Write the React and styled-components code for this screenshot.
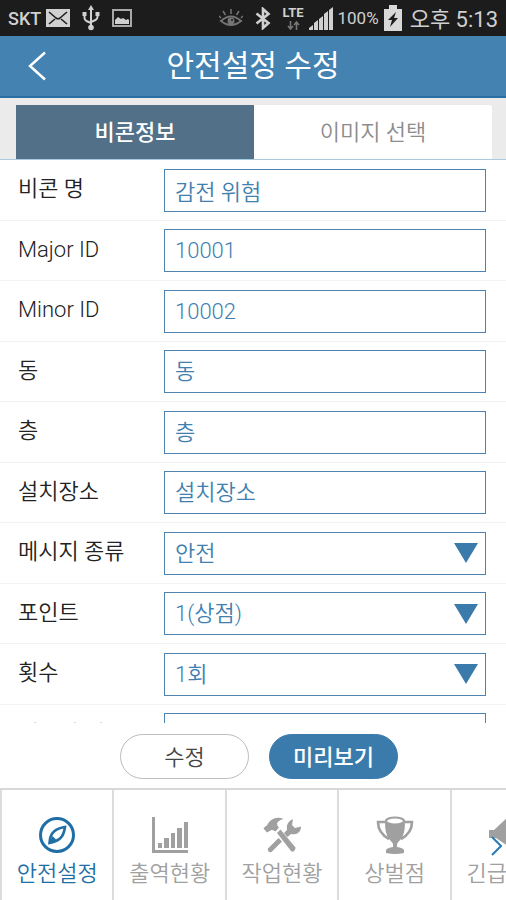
import React, { useState } from "react";
import styled, { createGlobalStyle, css } from "styled-components";

const GlobalStyle = createGlobalStyle`
  *, *::before, *::after { box-sizing: border-box; }
  html, body { margin: 0; }
  body, button, input, select {
    font-family: Roboto, "Noto Sans CJK KR", sans-serif;
  }
`;

const Screen = styled.div`
  display: flex;
  flex-direction: column;
  height: 100vh;
  overflow: hidden;
  background: #fff;
  font-size: 22px;
`;

const StatusBar = styled.div`
  display: flex;
  align-items: center;
  justify-content: space-between;
  flex: none;
  height: 36px;
  padding: 0 8px;
  background: #1c1c1c;
  color: #d0d0d0;
  white-space: nowrap;
  svg { display: block; flex: none; }
`;

const StatusGroup = styled.div`
  display: flex;
  align-items: center;
  gap: ${(p) => p.$gap}px;
`;

const Carrier = styled.span`
  font-size: 18px;
  font-weight: 500;
`;

const Network = styled.span`
  display: flex;
  flex-direction: column;
  align-items: center;
  gap: 2px;
  font-size: 13px;
  font-weight: 700;
  line-height: 12px;
`;

const Percent = styled.span`
  font-size: 17px;
`;

const Clock = styled.time`
  margin-left: 3px;
  padding-top: 3px;
  font-size: 22px;
  line-height: 33px;
`;

const Header = styled.header`
  display: grid;
  grid-template-columns: 76px 1fr 76px;
  align-items: center;
  flex: none;
  height: 62px;
  background: #4382b1;
  border-bottom: 2px solid #2a70a4;
`;

const BackButton = styled.button`
  display: flex;
  align-items: center;
  height: 60px;
  padding: 0 0 0 28px;
  border: 0;
  background: none;
  color: #fff;
`;

const Title = styled.h1`
  margin: 0;
  color: #fff;
  font-size: 30px;
  font-weight: 400;
  line-height: 60px;
  text-align: center;
  white-space: nowrap;
`;

const Tabs = styled.div`
  display: flex;
  flex: none;
  height: 62px;
  padding: 7px 14px 0 16px;
  background: #ebebeb;
  border-bottom: 1px solid #a9cbe0;
`;

const Tab = styled.button`
  flex: 1;
  padding: 0 0 4px;
  border: 0;
  font-size: 22px;
  font-weight: 350;
  background: #fff;
  color: #8c8c8c;
  border-radius: 0 3px 0 0;
  ${(p) =>
    p.$active &&
    css`
      background: #527088;
      color: #fff;
      font-weight: 500;
      border-radius: 0;
    `}
`;

const Form = styled.form`
  flex: 1;
  min-height: 0;
  overflow: hidden;
`;

const Row = styled.div`
  display: grid;
  grid-template-columns: 146px 1fr;
  align-items: center;
  height: 61px;
  padding: 0 20px 0 18px;
  border-bottom: 1px solid #f3f3f3;
  &:nth-child(even) { height: 60px; }
`;

const Label = styled.label`
  color: #222;
  font-weight: 350;
  line-height: 32px;
  padding-bottom: 2px;
  white-space: nowrap;
`;

const control = css`
  width: 100%;
  height: 43px;
  padding: 0 10px;
  border: 1px solid #4f82ae;
  border-radius: 0;
  background: #fff;
  color: #3f80b0;
  font-size: 22px;
  font-weight: 350;
  outline: none;
`;

const TextInput = styled.input`
  ${control}
  &::placeholder { color: #3f80b0; opacity: 1; }
`;

const SelectBox = styled.div`
  display: grid;
  align-items: center;
  > * { grid-area: 1 / 1; }
  svg { justify-self: end; margin-right: 8px; pointer-events: none; }
`;

const Select = styled.select`
  ${control}
  appearance: none;
`;

const Actions = styled.div`
  display: flex;
  justify-content: center;
  flex: none;
  gap: 20px;
  height: 65px;
  padding: 11px 0 9px 12px;
`;

const Pill = styled.button`
  width: 129px;
  padding: 0 0 3px;
  border: 1px solid ${(p) => (p.$primary ? "#3b7bab" : "#bcbcbc")};
  border-radius: 23px;
  background: ${(p) => (p.$primary ? "#3b7bab" : "#fff")};
  color: ${(p) => (p.$primary ? "#fff" : "#444")};
  font-size: 22px;
  font-weight: ${(p) => (p.$primary ? 500 : 350)};
`;

const Nav = styled.nav`
  display: grid;
  grid-template-columns: repeat(5, calc(100% / 4.5));
  position: relative;
  flex: none;
  height: 112px;
  overflow: hidden;
  border-top: 2px solid #d8d8d8;
`;

const NavItem = styled.a`
  display: flex;
  flex-direction: column;
  align-items: center;
  gap: 4px;
  padding-top: 26px;
  border-left: 2px solid #dcdcdc;
  color: ${(p) => (p.$active ? "#1f6fa6" : "#a0a0a0")};
  font-weight: 350;
  line-height: 32px;
  text-decoration: none;
  white-space: nowrap;
`;

const NextButton = styled.button`
  position: absolute;
  right: 4px;
  top: 46px;
  padding: 0;
  border: 0;
  background: none;
  color: #2a7ab5;
  svg { display: block; }
`;

const MailIcon = () => (
  <svg width="24" height="18" viewBox="0 0 24 18">
    <rect width="24" height="18" fill="#d0d0d0" />
    <path d="M3 3l7 6q2 1.500 4 0l7-6M3 15l6-5M21 15l-6-5" fill="none" stroke="#1c1c1c" strokeWidth="1.600" />
  </svg>
);

const UsbIcon = () => (
  <svg width="18" height="26" viewBox="0 0 18 26" fill="none" stroke="#d0d0d0" strokeWidth="2">
    <path d="M9 4v18M2.500 9v4q0 2 2 3l4.500 2M15.500 9v3q0 2-2 3L9 17" />
    <path d="M9 0l3 5H6z" fill="#d0d0d0" stroke="none" />
    <circle cx="9" cy="22.500" r="2.800" fill="#d0d0d0" stroke="none" />
    <path d="M0.500 7h4v4h-4zM13.500 7h4v4h-4z" fill="#d0d0d0" stroke="none" />
  </svg>
);

const ImageIcon = () => (
  <svg width="20" height="18" viewBox="0 0 20 18">
    <rect x="1" y="1" width="18" height="16" fill="none" stroke="#a8a8a8" strokeWidth="2" />
    <path d="M3 15v-4l3-3 3 2 2-1 3 2 2-1 1 1v4z" fill="#d0d0d0" />
  </svg>
);

const EyeIcon = () => (
  <svg width="24" height="18" viewBox="0 0 24 18" fill="none" stroke="#747474" strokeWidth="2">
    <path d="M2 12q10-9 20 0q-10 8-20 0z" />
    <circle cx="12" cy="12" r="3.500" fill="#747474" stroke="none" />
    <path d="M12 5V0M6.500 6L4 2M17.500 6L20 2M2 9L0 7M22 9l2-2" strokeWidth="1.500" />
    <circle cx="13" cy="11" r="1" fill="#1c1c1c" stroke="none" />
  </svg>
);

const BluetoothIcon = () => (
  <svg width="16" height="23" viewBox="0 0 16 23" fill="none" stroke="#d0d0d0" strokeWidth="2.600">
    <path d="M1.500 6.500L13.500 16l-5.500 5V2l5.500 5L1.500 16.500" />
  </svg>
);

const ArrowsIcon = () => (
  <svg width="13" height="9" viewBox="0 0 13 9" fill="none" stroke="#777" strokeWidth="1.600">
    <path d="M3.500 0v7M1 5l2.500 3L6 5M9.500 9V2M7 4l2.500-3L12 4" />
  </svg>
);

const SignalIcon = () => (
  <svg width="24" height="24" viewBox="0 0 24 24" fill="#d0d0d0">
    <path d="M0 24v-2l4-3v5zM5 24v-7l4-3v10zM10 24V13l4-3v14zM15 24V8l4-3v19zM20 24V4l4-3v23z" />
  </svg>
);

const BatteryIcon = () => (
  <svg width="18" height="26" viewBox="0 0 18 26">
    <path d="M5 0h8v4h5v22H0V4h5z" fill="#d8d8d8" />
    <path d="M12 7L4 15h4l-2 7 8-9h-4z" fill="#1c1c1c" />
  </svg>
);

const BackIcon = () => (
  <svg width="18" height="30" viewBox="0 0 18 30" fill="none" stroke="currentColor" strokeWidth="2.500">
    <path d="M17 1.500L2 15l15 13.500" />
  </svg>
);

const ArrowDown = () => (
  <svg width="24" height="20" viewBox="0 0 24 20">
    <path d="M0 0h24L12 20z" fill="#3b7bab" />
  </svg>
);

const CompassIcon = () => (
  <svg width="38" height="38" viewBox="0 0 38 38" fill="none" stroke="currentColor">
    <circle cx="19" cy="19" r="16.500" strokeWidth="3" />
    <path d="M27 11q-1 8-5 11.500T11.500 27Q12 19 16 15.500T27 11z" strokeWidth="2.600" />
    <path d="M10.500 28l4-8 4.500 4.500z" fill="currentColor" stroke="none" />
  </svg>
);

const ChartIcon = () => (
  <svg width="38" height="38" viewBox="0 0 38 38" fill="currentColor">
    <path d="M1 1h3v33h33v3H1zM7 27h4v5H7zM13 22h5v10h-5zM20 17h4v15h-4zM26 12h5v20h-5zM33 6h4v26h-4z" />
  </svg>
);

const ToolsIcon = () => (
  <svg width="38" height="38" viewBox="0 0 38 38" fill="currentColor">
    <path d="M5 32.500L15.500 22l3.500 3.500L8.500 36q-2 .5-3-.5t-.5-3z" />
    <path d="M14 17l3.500-3.500L32.500 31.500q0 2-1.500 3.500-1.500 1.500-3 0z" />
    <path d="M0.500 12.500Q2 10 4 9.500q2-5 7-7Q16 1 20.500 3 15 4.500 14 7.500q0 2 2 4l-3.500 4q-2.500-2-4-1.500L4 16.500z" />
    <path d="M30 3l-1 6 3 3 6-1.500q0 4-3 6.500-3 2-7 1l-3.500 3-3.500-4 3-3q-1-4 1-7 2-3 5-4z" />
  </svg>
);

const TrophyIcon = () => (
  <svg width="38" height="38" viewBox="0 0 38 38">
    <g fill="none" stroke="currentColor">
      <path d="M9 6H2q0 11 11 17M29 6h7q0 11-11 17" strokeWidth="2.600" />
      <ellipse cx="19" cy="5" rx="9" ry="3.500" strokeWidth="2.200" />
    </g>
    <path d="M9 6q10 6 20 0 0 12-4 17-3 3-4 5v3q6 1 7 3v3q-9 2-18 0v-3q1-2 7-3v-3q-1-2-4-5-4-5-4-17z" fill="currentColor" />
  </svg>
);

const MegaphoneIcon = () => (
  <svg width="38" height="38" viewBox="0 0 38 38" fill="currentColor">
    <path d="M1 14h5L20 1v29L8 22H1zM24 12q7 7 0 13z" />
  </svg>
);

const NextIcon = () => (
  <svg width="11" height="20" viewBox="0 0 11 20" fill="none" stroke="currentColor" strokeWidth="2">
    <path d="M1 1l9 9-9 9" />
  </svg>
);

const fields = [
  { id: "name", label: "비콘 명", value: "감전 위험" },
  { id: "major", label: "Major ID", value: "10001" },
  { id: "minor", label: "Minor ID", value: "10002" },
  { id: "building", label: "동", placeholder: "동" },
  { id: "floor", label: "층", placeholder: "층" },
  { id: "place", label: "설치장소", placeholder: "설치장소" },
  { id: "type", label: "메시지 종류", options: ["안전"] },
  { id: "point", label: "포인트", options: ["1(상점)"] },
  { id: "count", label: "횟수", options: ["1회"] },
  { id: "message", label: "메시지 내용", value: "" },
];

const navItems = [
  { label: "안전설정", Icon: CompassIcon },
  { label: "출역현황", Icon: ChartIcon },
  { label: "작업현황", Icon: ToolsIcon },
  { label: "상벌점", Icon: TrophyIcon },
  { label: "긴급호출", Icon: MegaphoneIcon },
];

function Field({ id, label, value, placeholder, options }) {
  return (
    <Row>
      <Label htmlFor={id}>{label}</Label>
      {options ? (
        <SelectBox>
          <Select id={id}>
            {options.map((o) => (
              <option key={o}>{o}</option>
            ))}
          </Select>
          <ArrowDown />
        </SelectBox>
      ) : (
        <TextInput id={id} type="text" defaultValue={value} placeholder={placeholder} />
      )}
    </Row>
  );
}

export default function App() {
  const [tab, setTab] = useState(0);
  return (
    <>
      <GlobalStyle />
      <Screen>
        <StatusBar>
          <StatusGroup $gap={12}>
            <StatusGroup $gap={5}>
              <Carrier>SKT</Carrier>
              <MailIcon />
            </StatusGroup>
            <UsbIcon />
            <ImageIcon />
          </StatusGroup>
          <StatusGroup $gap={5}>
            <StatusGroup $gap={12}>
              <EyeIcon />
              <BluetoothIcon />
              <Network>
                LTE
                <ArrowsIcon />
              </Network>
            </StatusGroup>
            <SignalIcon />
            <Percent>100%</Percent>
            <BatteryIcon />
            <Clock>오후 5:13</Clock>
          </StatusGroup>
        </StatusBar>
        <Header>
          <BackButton type="button" aria-label="뒤로">
            <BackIcon />
          </BackButton>
          <Title>안전설정 수정</Title>
        </Header>
        <Tabs role="tablist">
          {["비콘정보", "이미지 선택"].map((name, i) => (
            <Tab key={name} type="button" role="tab" aria-selected={tab === i} $active={tab === i} onClick={() => setTab(i)}>
              {name}
            </Tab>
          ))}
        </Tabs>
        <Form id="beacon" onSubmit={(e) => e.preventDefault()}>
          {fields.map((f) => (
            <Field key={f.id} {...f} />
          ))}
        </Form>
        <Actions>
          <Pill type="submit" form="beacon">수정</Pill>
          <Pill type="button" $primary>미리보기</Pill>
        </Actions>
        <Nav>
          {navItems.map(({ label, Icon }, i) => (
            <NavItem key={label} href="#" $active={i === 0}>
              <Icon />
              {label}
            </NavItem>
          ))}
          <NextButton type="button" aria-label="다음">
            <NextIcon />
          </NextButton>
        </Nav>
      </Screen>
    </>
  );
}
